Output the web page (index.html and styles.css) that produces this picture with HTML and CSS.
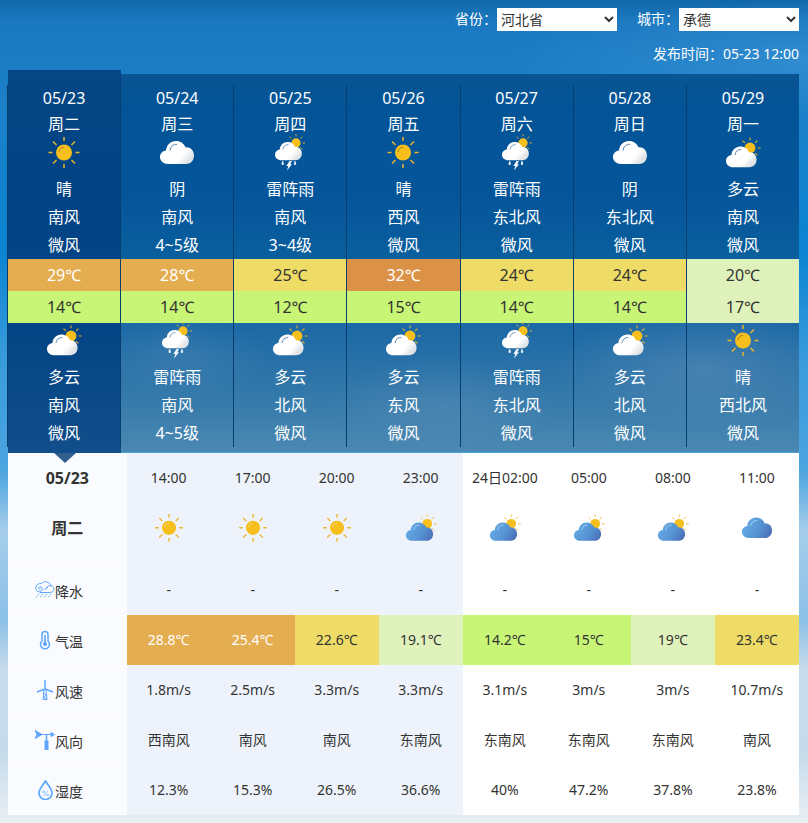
FILE: index.html
```
<!DOCTYPE html>
<html lang="zh-CN">

<head>
    <meta charset="UTF-8">
    <meta name="viewport" content="width=device-width, initial-scale=1.0">
    <title>天气预报</title>
    <link rel="stylesheet" href="styles.css">
</head>

<body>
    <!-- 图标 -->
    <svg class="sprite" aria-hidden="true">
        <defs>
            <linearGradient id="white" x1="0" y1="0" x2="1" y2="0.6">
                <stop offset="0.75" stop-color="#ffffff" />
                <stop offset="1" stop-color="#dfe2e6" />
            </linearGradient>
            <linearGradient id="blue" x1="0" y1="0.3" x2="1" y2="0.7">
                <stop offset="0" stop-color="#68ade6" />
                <stop offset="0.6" stop-color="#5591d2" />
                <stop offset="1" stop-color="#4a70b8" />
            </linearGradient>
            <g id="sunshape">
                <circle r="8" fill="#f6bf1c" />
                <path d="M0-11.5V-15.5M0 11.5V15.5M-11.5 0H-15.5M11.5 0H15.5M-7.5-7.5L-11-11M7.5-7.5L11-11M-7.5 7.5L-11 11M7.5 7.5L11 11" fill="none" stroke="#eab52c" stroke-width="1.5" />
            </g>
            <g id="cloudshape">
                <path class="cloud" d="M8 23C3.500 23 0 20 0 16C0 12.500 2.500 10 6 9.500C6.500 4 10.500 0 16 0C20.500 0 24 2.500 25.500 6.300C30.500 6 34 9.500 34 14.500C34 19.500 30.500 23 26 23Z" />
                <path class="shine" d="M10 9.500C10.500 5.500 13 3.300 17 3.300" />
            </g>
        </defs>
        <symbol id="sun" viewBox="0 0 36 36" overflow="visible">
            <use href="#sunshape" x="18" y="15.500" />
            <path class="sunshine" d="M13 15C13.300 12.200 15 10.500 18 10.300" />
        </symbol>
        <symbol id="cloud" viewBox="0 0 36 36" overflow="visible">
            <use href="#cloudshape" x="1" y="4" />
        </symbol>
        <symbol id="cloudy" viewBox="0 0 36 36" overflow="visible">
            <use href="#sunshape" transform="translate(25 11) scale(.68)" />
            <use href="#cloudshape" transform="translate(1 9.500) scale(.9)" />
        </symbol>
        <symbol id="storm" viewBox="0 0 36 36" overflow="visible">
            <use href="#sunshape" transform="translate(24 6) scale(.58)" />
            <use href="#cloudshape" transform="translate(3 5) scale(.79)" />
            <path d="M10.700 24Q8.800 28 10.700 28T10.700 24M23 24Q21.100 28 23 28T23 24" fill="#fff" stroke="#e3edf6" stroke-width="0.5" />
            <path d="M17.500 24H20L18.300 27.300H20L15 33.500L16.300 29H14.300Z" fill="#f2f6fa" />
        </symbol>
        <symbol id="rain" viewBox="0 0 20 20">
            <path d="M5 12.500H15.500C20 12 20 6.500 16.300 6C15 1.500 8.500.5 6.500 3.500C1 3 0 8 1.500 10.500C3 13 7.500 12 7.300 8.800C7 6 3.300 6.300 3.600 8.500C3.800 10 5.500 9.800 5.500 8.700M9 10L12.500 7.500C12.500 5.500 14.500 5 16.300 6M12.500 7.500L11 7.200" />
            <path d="M4 14L1 17.500M8 14L5 17.500M12 14L9 17.500M16 14L13 17.500" stroke-dasharray="1.600 1" />
        </symbol>
        <symbol id="thermo" viewBox="0 0 20 20">
            <path d="M7 11V4.500A3 3 0 0 1 13 4.500V11A4.500 4.500 0 1 1 7 11Z" stroke-width="1.500" />
            <path d="M10 5V13" stroke-width="1.600" />
            <circle cx="10" cy="14" r="1.600" fill="#5fa6ff" />
        </symbol>
        <symbol id="turbine" viewBox="0 0 20 20">
            <path d="M10 9V0M10 9L2 12M10 9L18 12" stroke-width="1.500" />
            <path d="M9 10L8 19.500H12L11 10M8.700 13L11.500 15L8.500 17L11.800 19" />
        </symbol>
        <symbol id="vane" viewBox="0 0 20 20">
            <path d="M0 .5L7 4.500L0 8.500L2 4.500Z" fill="#5fa6ff" />
            <path d="M5 4.500H18M16 2.500L19.500 4.500L16 6.500Z" fill="#5fa6ff" />
            <path d="M11.500 4V12" stroke-width="1.500" />
            <path d="M11.500 10.500V20" stroke-width="4" />
        </symbol>
        <symbol id="drop" viewBox="0 0 20 20">
            <path d="M10.500 1C8 5 4 9 4 13A6.500 6.500 0 0 0 17 13C17 9 13 5 10.500 1Z" stroke-width="1.700" />
            <path d="M12.800 10.500L8.200 16" stroke-width="0.700" />
            <circle cx="8.500" cy="11.800" r="1" stroke-width="0.700" />
            <circle cx="12.500" cy="14.800" r="1" stroke-width="0.700" />
        </symbol>
    </svg>

    <form class="search">
        <label for="province">省份：</label>
        <select id="province">
            <option>河北省</option>
        </select>
        <label class="city" for="city">城市：</label>
        <select id="city">
            <option>承德</option>
        </select>
    </form>
    <p class="time">发布时间：05-23 12:00</p>

    <!-- 七天预报 -->
    <div class="week">
        <ul class="days">
            <li class="day active">
                <p class="date">05/23</p>
                <p class="date">周二</p>
                <svg class="icon"><use href="#sun" /></svg>
                <p>晴</p>
                <p>南风</p>
                <p>微风</p>
                <p class="temp t25">29℃</p>
                <p class="temp t10">14℃</p>
                <svg class="icon night"><use href="#cloudy" /></svg>
                <p>多云</p>
                <p>南风</p>
                <p>微风</p>
            </li>
            <li class="day">
                <p class="date">05/24</p>
                <p class="date">周三</p>
                <svg class="icon"><use href="#cloud" /></svg>
                <p>阴</p>
                <p>南风</p>
                <p>4~5级</p>
                <p class="temp t25">28℃</p>
                <p class="temp t10">14℃</p>
                <svg class="icon night"><use href="#storm" /></svg>
                <p>雷阵雨</p>
                <p>南风</p>
                <p>4~5级</p>
            </li>
            <li class="day">
                <p class="date">05/25</p>
                <p class="date">周四</p>
                <svg class="icon"><use href="#storm" /></svg>
                <p>雷阵雨</p>
                <p>南风</p>
                <p>3~4级</p>
                <p class="temp t20">25℃</p>
                <p class="temp t10">12℃</p>
                <svg class="icon night"><use href="#cloudy" /></svg>
                <p>多云</p>
                <p>北风</p>
                <p>微风</p>
            </li>
            <li class="day">
                <p class="date">05/26</p>
                <p class="date">周五</p>
                <svg class="icon"><use href="#sun" /></svg>
                <p>晴</p>
                <p>西风</p>
                <p>微风</p>
                <p class="temp t30">32℃</p>
                <p class="temp t10">15℃</p>
                <svg class="icon night"><use href="#cloudy" /></svg>
                <p>多云</p>
                <p>东风</p>
                <p>微风</p>
            </li>
            <li class="day">
                <p class="date">05/27</p>
                <p class="date">周六</p>
                <svg class="icon"><use href="#storm" /></svg>
                <p>雷阵雨</p>
                <p>东北风</p>
                <p>微风</p>
                <p class="temp t20">24℃</p>
                <p class="temp t10">14℃</p>
                <svg class="icon night"><use href="#storm" /></svg>
                <p>雷阵雨</p>
                <p>东北风</p>
                <p>微风</p>
            </li>
            <li class="day">
                <p class="date">05/28</p>
                <p class="date">周日</p>
                <svg class="icon"><use href="#cloud" /></svg>
                <p>阴</p>
                <p>东北风</p>
                <p>微风</p>
                <p class="temp t20">24℃</p>
                <p class="temp t10">14℃</p>
                <svg class="icon night"><use href="#cloudy" /></svg>
                <p>多云</p>
                <p>北风</p>
                <p>微风</p>
            </li>
            <li class="day">
                <p class="date">05/29</p>
                <p class="date">周一</p>
                <svg class="icon"><use href="#cloudy" /></svg>
                <p>多云</p>
                <p>南风</p>
                <p>微风</p>
                <p class="temp t15">20℃</p>
                <p class="temp t15">17℃</p>
                <svg class="icon night"><use href="#sun" /></svg>
                <p>晴</p>
                <p>西北风</p>
                <p>微风</p>
            </li>
        </ul>
    </div>

    <!-- 逐小时预报 -->
    <table class="hours">
        <colgroup>
            <col class="head">
            <col class="today" span="4">
            <col span="4">
        </colgroup>
        <tr>
            <th class="title" rowspan="2"><p>05/23</p><p>周二</p></th>
            <td>14:00</td>
            <td>17:00</td>
            <td>20:00</td>
            <td>23:00</td>
            <td>24日02:00</td>
            <td>05:00</td>
            <td>08:00</td>
            <td>11:00</td>
        </tr>
        <tr class="weather">
            <td><svg class="icon"><use href="#sun" /></svg></td>
            <td><svg class="icon"><use href="#sun" /></svg></td>
            <td><svg class="icon"><use href="#sun" /></svg></td>
            <td><svg class="icon"><use href="#cloudy" /></svg></td>
            <td><svg class="icon"><use href="#cloudy" /></svg></td>
            <td><svg class="icon"><use href="#cloudy" /></svg></td>
            <td><svg class="icon"><use href="#cloudy" /></svg></td>
            <td><svg class="icon"><use href="#cloud" /></svg></td>
        </tr>
        <tr>
            <th><svg class="label"><use href="#rain" /></svg>降水</th>
            <td>-</td>
            <td>-</td>
            <td>-</td>
            <td>-</td>
            <td>-</td>
            <td>-</td>
            <td>-</td>
            <td>-</td>
        </tr>
        <tr>
            <th><svg class="label"><use href="#thermo" /></svg>气温</th>
            <td class="t25">28.8℃</td>
            <td class="t25">25.4℃</td>
            <td class="t20">22.6℃</td>
            <td class="t15">19.1℃</td>
            <td class="t10">14.2℃</td>
            <td class="t10">15℃</td>
            <td class="t15">19℃</td>
            <td class="t20">23.4℃</td>
        </tr>
        <tr>
            <th><svg class="label"><use href="#turbine" /></svg>风速</th>
            <td>1.8m/s</td>
            <td>2.5m/s</td>
            <td>3.3m/s</td>
            <td>3.3m/s</td>
            <td>3.1m/s</td>
            <td>3m/s</td>
            <td>3m/s</td>
            <td>10.7m/s</td>
        </tr>
        <tr>
            <th><svg class="label"><use href="#vane" /></svg>风向</th>
            <td>西南风</td>
            <td>南风</td>
            <td>南风</td>
            <td>东南风</td>
            <td>东南风</td>
            <td>东南风</td>
            <td>东南风</td>
            <td>南风</td>
        </tr>
        <tr>
            <th><svg class="label"><use href="#drop" /></svg>湿度</th>
            <td>12.3%</td>
            <td>15.3%</td>
            <td>26.5%</td>
            <td>36.6%</td>
            <td>40%</td>
            <td>47.2%</td>
            <td>37.8%</td>
            <td>23.8%</td>
        </tr>
    </table>
</body>

</html>
```
FILE: styles.css
```
* {
    box-sizing: border-box;
    margin: 0;
    padding: 0;
}

body {
    min-height: 100vh;
    padding: 8px 9px 8px 8px;
    font-family: "Noto Sans", "Noto Sans CJK SC", sans-serif;
    font-size: 14px;
    color: #333;
    background:
        radial-gradient(ellipse 300px 60px at 100% 60px, rgba(70, 155, 220, .5), transparent),
        linear-gradient(#1268a8 0, #1a78bf 20px, #1c80c8 100px, #0a84d2 250px, #3a9bdc 360px, #4ba4e0 470px, #a5cdea 530px, #8cc1e8 620px, #c9dcec 670px, #c6dbeb 750px, #e9eff3 823px);
}

.sprite {
    position: absolute;
    width: 0;
    height: 0;
}

.search {
    display: flex;
    justify-content: flex-end;
    height: 23px;
    line-height: 21px;
    color: #fff;
}

.search .city {
    margin-left: 20px;
}

.search select {
    width: 120px;
    height: 23px;
    border: none;
    font-family: inherit;
    font-size: 14px;
    color: #333;
    background: #fff;
}

.time {
    padding: 12px 0 9px;
    line-height: 22px;
    text-align: right;
    color: #fff;
}

.week {
    margin-bottom: 1px;
    padding: 11px 0 5px;
    background:
        radial-gradient(ellipse 150px 60px at 88% 78%, rgba(110, 150, 190, .4), transparent),
        radial-gradient(ellipse 110px 50px at 55% 88%, rgba(110, 150, 190, .3), transparent),
        radial-gradient(ellipse 90px 40px at 22% 75%, rgba(100, 150, 190, .25), transparent),
        linear-gradient(#0a5592 0, #035497 30px, #04559a 120px, #0a5f9d 185px, #1b68a5 250px, #2f76a9 310px, #4a88b2 378px);
}

.days {
    display: grid;
    grid-template-columns: repeat(7, 1fr);
    margin-left: -1px;
    list-style: none;
}

.day {
    position: relative;
    isolation: isolate;
    border-left: 1px solid #063f6e;
    font-size: 16px;
    line-height: 28px;
    text-align: center;
    color: #fff;
    --cloud: url(#white);
    --shine: #4f7fae;
    --sunshine: #a98420;
}

.active::before {
    content: "";
    position: absolute;
    top: -15px;
    right: -1px;
    bottom: -6px;
    left: 0;
    z-index: -1;
    background: linear-gradient(#064684, #024385 30%, #044585 70%, #114e8b);
}

.active::after {
    content: "";
    position: absolute;
    top: calc(100% + 6px);
    left: 50%;
    margin-left: -10px;
    border: 11px solid transparent;
    border-top: 10px solid #31608f;
    border-bottom: none;
}

.day .date {
    line-height: 26px;
}

.day .temp {
    line-height: 32px;
}

.icon {
    display: block;
    width: 36px;
    height: 36px;
    margin: 0 auto 2px;
    overflow: visible;
}

.night {
    margin-top: 2px;
}

.cloud {
    fill: var(--cloud);
}

.shine {
    fill: none;
    stroke: var(--shine);
    stroke-width: 1;
}

.sunshine {
    fill: none;
    stroke: var(--sunshine);
    stroke-width: 1;
}

.t30 {
    color: #fff;
    background: #db9247;
}

.t25 {
    color: #fff;
    background: #e4ad50;
}

.t20 {
    color: #333;
    background: #eedc66;
}

.t15 {
    color: #333;
    background: #e0f2bc;
}

.t10 {
    color: #333;
    background: #c8f576;
}

.hours {
    width: 100%;
    table-layout: fixed;
    border-collapse: collapse;
    text-align: center;
    background: #fff;
    --cloud: url(#blue);
    --shine: #a8d4f5;
    --sunshine: #fbe08a;
}

.head {
    width: 15%;
}

.today {
    background: #eef3fb;
}

.hours tr {
    height: 50px;
}

.hours .weather {
    height: 62px;
}

.hours td {
    padding-bottom: 2px;
}

.hours .weather td {
    padding-top: 11px;
    vertical-align: top;
}

.weather .icon {
    width: 32px;
    height: 32px;
}

.hours th {
    padding-left: 27px;
    background: linear-gradient(#fff 1px, #f9fbfe 1px);
    font-weight: normal;
    text-align: left;
}

.hours .title {
    padding: 0;
    background: #f9fbfe;
    font-size: 16px;
    font-weight: bold;
    line-height: 50px;
    text-align: center;
    vertical-align: top;
}

.label {
    width: 20px;
    height: 20px;
    fill: none;
    stroke: #5fa6ff;
    stroke-width: 1;
    vertical-align: -3px;
}
```
